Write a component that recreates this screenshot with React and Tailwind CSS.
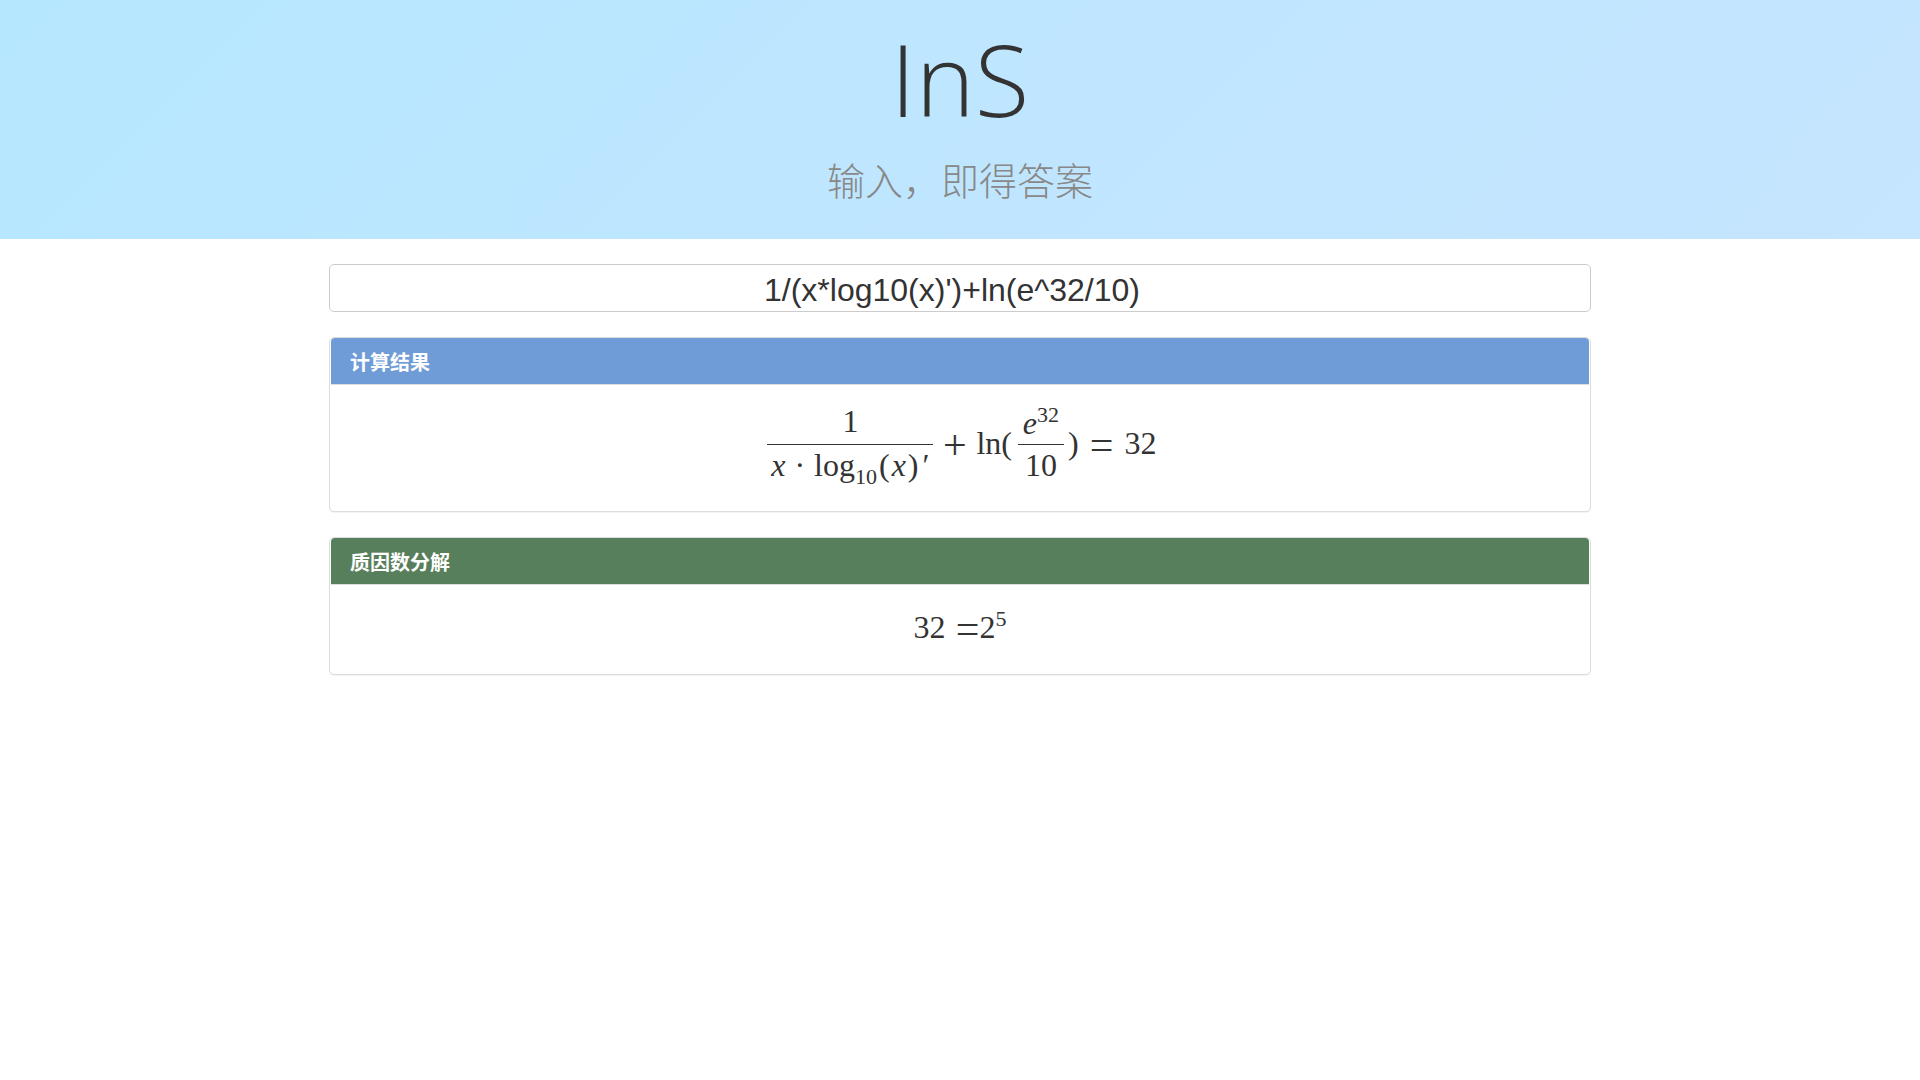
function Fraction({ numerator, denominator, className = '' }) {
  return (
    <span className={`inline-flex flex-col text-center ${className}`}>
      <span className="block h-10 leading-[34px]">{numerator}</span>
      <span className="block h-px bg-[#333]" />
      <span className="block h-[41px] pt-0.5 leading-9">{denominator}</span>
    </span>
  );
}

function Sup({ children }) {
  return <span className="align-[12px] text-[22px] leading-none">{children}</span>;
}

function Operator({ children, className = '' }) {
  return (
    <span className={`inline-block text-center text-[42px] leading-10 ${className}`}>
      {children}
    </span>
  );
}

function Term({ children, className = '' }) {
  return <span className={`pb-1 leading-10 ${className}`}>{children}</span>;
}

function Panel({ title, headerClass, bodyClass, children }) {
  return (
    <section className="mb-[25px] rounded-[5px] border border-[#ddd] bg-white p-px pt-0 shadow-[0_1px_1px_rgba(0,0,0,0.05)]">
      <h2
        className={`rounded-t-[4px] border-b border-[#ddd] px-[19px] pt-2.5 pb-1.5 text-xl leading-[30px] font-bold text-white ${headerClass}`}
      >
        {title}
      </h2>
      <div
        className={`flex items-center justify-center font-['Liberation_Serif',serif] text-[32px] whitespace-nowrap ${bodyClass}`}
      >
        {children}
      </div>
    </section>
  );
}

export default function App() {
  return (
    <div className="min-h-screen bg-white font-['Liberation_Sans','Noto_Sans_CJK_SC',sans-serif] text-[#333]">
      <header className="bg-[linear-gradient(135deg,#b5e7ff_0%,#bfe6ff_50%,#c6e5ff_100%)] pt-4 pb-[33px] text-center">
        <h1 className="font-['Open_Sans',sans-serif] text-[100px] leading-[124px] font-light">InS</h1>
        <p className="pt-[11px] font-['Noto_Sans_CJK_SC',sans-serif] text-[38px] leading-[55px] font-light text-[#888]">
          输入，即得答案
        </p>
      </header>

      <main className="mx-auto max-w-[1262px] pt-[25px]">
        <input
          type="text"
          aria-label="输入"
          defaultValue="1/(x*log10(x)')+ln(e^32/10)"
          className="mb-[25px] block h-12 w-full rounded-[5px] border border-[#ccc] bg-white pt-1 pr-7 pl-3 text-center text-[32px] leading-10 outline-none"
        />

        <Panel title="计算结果" headerClass="bg-[#6f9cd6]" bodyClass="pt-[19px] pb-6 pl-1">
          <Fraction
            className="w-[166px]"
            numerator="1"
            denominator={
              <>
                <i>x</i>
                <span className="px-[9px]">·</span>
                log
                <span className="align-[-8px] text-[22px] leading-none">10</span>
                <span className="pl-0.5">(</span>
                <i className="px-0.5">x</i>)<span className="pl-1">′</span>
              </>
            }
          />
          <Operator className="w-[43px]">+</Operator>
          <Term>ln(</Term>
          <Fraction
            className="mr-1 ml-1.5 w-[46px]"
            numerator={
              <>
                <i>e</i>
                <Sup>32</Sup>
              </>
            }
            denominator="10"
          />
          <Term>)</Term>
          <Operator className="w-[46px]">=</Operator>
          <Term>32</Term>
        </Panel>

        <Panel title="质因数分解" headerClass="bg-[#587f5c]" bodyClass="pt-[22px] pb-[22px]">
          <Term>32</Term>
          <Operator className="w-[34px] text-right">=</Operator>
          <Term>
            2<Sup>5</Sup>
          </Term>
        </Panel>
      </main>
    </div>
  );
}
